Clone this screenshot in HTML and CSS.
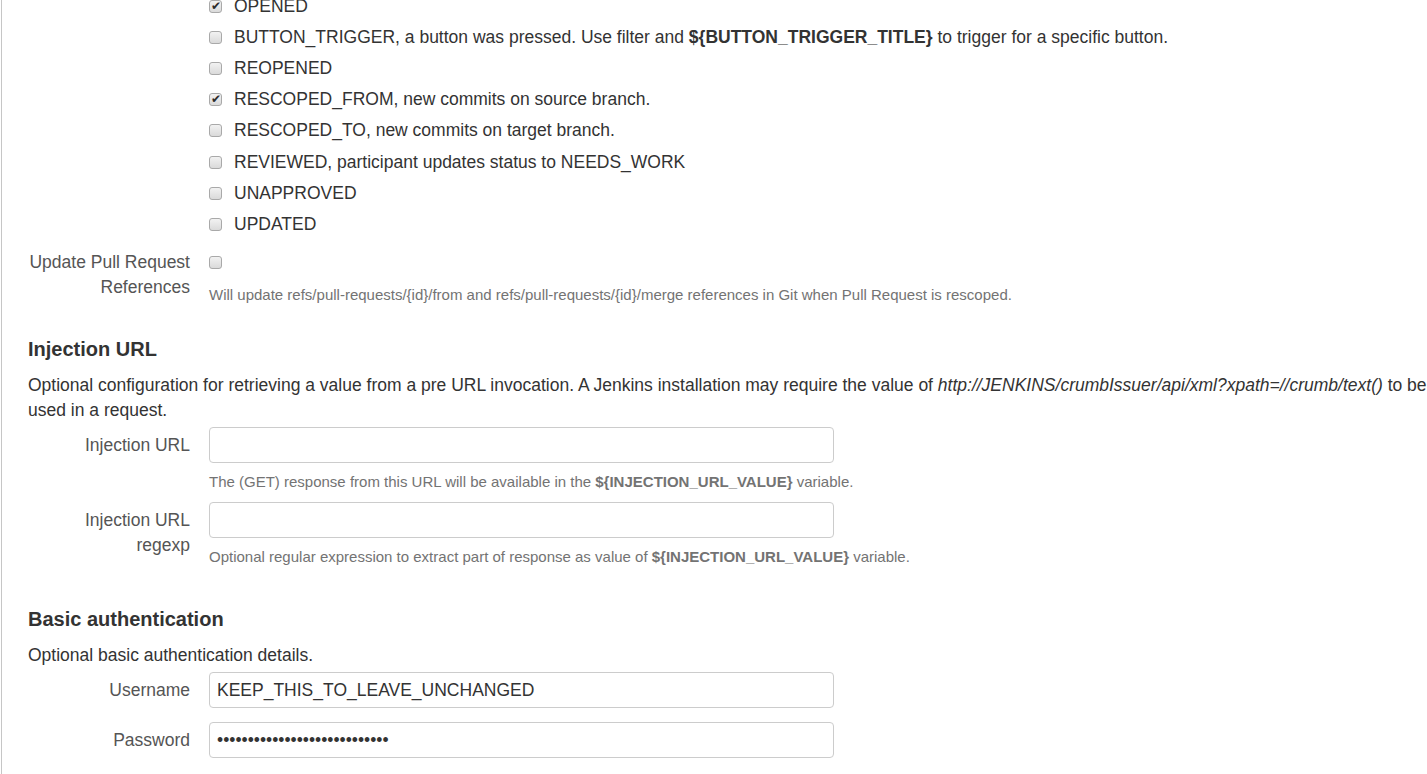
FILE: index.html
```html
<!DOCTYPE html>
<html lang="en">
<head>
    <meta charset="UTF-8">
    <title>Pull Request Notifier settings</title>
    <link rel="stylesheet" href="styles.css">
</head>
<body>

    <div class="page">

        <!-- trigger events -->
        <div class="events">
            <label class="check-row"><input type="checkbox" class="check" checked><span>OPENED</span></label>
            <label class="check-row"><input type="checkbox" class="check"><span>BUTTON_TRIGGER, a button was pressed. Use filter and <b>${BUTTON_TRIGGER_TITLE}</b> to trigger for a specific button.</span></label>
            <label class="check-row"><input type="checkbox" class="check"><span>REOPENED</span></label>
            <label class="check-row"><input type="checkbox" class="check" checked><span>RESCOPED_FROM, new commits on source branch.</span></label>
            <label class="check-row"><input type="checkbox" class="check"><span>RESCOPED_TO, new commits on target branch.</span></label>
            <label class="check-row"><input type="checkbox" class="check"><span>REVIEWED, participant updates status to NEEDS_WORK</span></label>
            <label class="check-row"><input type="checkbox" class="check"><span>UNAPPROVED</span></label>
            <label class="check-row"><input type="checkbox" class="check"><span>UPDATED</span></label>
        </div>

        <div class="form-row refs-row">
            <label class="form-label">Update Pull Request References</label>
            <div class="form-field">
                <div class="single-check"><input type="checkbox" class="check"></div>
                <div class="help help-refs">Will update refs/pull-requests/{id}/from and refs/pull-requests/{id}/merge references in Git when Pull Request is rescoped.</div>
            </div>
        </div>

        <!-- injection url -->
        <h3 class="section-title">Injection URL</h3>
        <p class="section-text">Optional configuration for retrieving a value from a pre URL invocation. A Jenkins installation may require the value of <i>http://JENKINS/crumbIssuer/api/xml?xpath=//crumb/text()</i> to be<br>used in a request.</p>

        <div class="form-row">
            <label class="form-label">Injection URL</label>
            <div class="form-field">
                <input type="text" class="text-input">
                <div class="help">The (GET) response from this URL will be available in the <b>${INJECTION_URL_VALUE}</b> variable.</div>
            </div>
        </div>

        <div class="form-row">
            <label class="form-label">Injection URL regexp</label>
            <div class="form-field">
                <input type="text" class="text-input">
                <div class="help">Optional regular expression to extract part of response as value of <b>${INJECTION_URL_VALUE}</b> variable.</div>
            </div>
        </div>

        <!-- basic auth -->
        <h3 class="section-title auth-title">Basic authentication</h3>
        <p class="section-text">Optional basic authentication details.</p>

        <div class="form-row">
            <label class="form-label">Username</label>
            <div class="form-field">
                <input type="text" class="text-input" value="KEEP_THIS_TO_LEAVE_UNCHANGED">
            </div>
        </div>

        <div class="form-row password-row">
            <label class="form-label">Password</label>
            <div class="form-field">
                <input type="password" class="text-input" value="KEEP_THIS_TO_LEAVE_UNCHANGED">
            </div>
        </div>

    </div>

</body>
</html>
```

FILE: styles.css
```css
html, body {
    margin: 0;
    padding: 0;
    background: #fff;
    overflow: hidden;
}
body {
    font-family: "Liberation Sans", Arial, sans-serif;
    font-size: 17.5px;
    color: #333;
}

.page {
    margin-left: 1px;
    border-left: 1px solid #c6c6c6;
    padding-left: 26px;
    width: 1420px;
    min-height: 800px;
}

/* checkbox list */
.events {
    margin-top: -9.5px;
    padding-left: 181px;
}
.check-row {
    display: flex;
    align-items: center;
    height: 31.2px;
    white-space: nowrap;
}

.check {
    appearance: none;
    -webkit-appearance: none;
    width: 13px;
    height: 13px;
    margin: 0 12px 0 0;
    border: 1px solid #a9a9a9;
    border-radius: 3px;
    background: linear-gradient(#f2f2f2, #dadada);
    position: relative;
    flex-shrink: 0;
}
.check:checked::after {
    content: "\2714";
    position: absolute;
    left: 1px;
    top: -2px;
    font-size: 12px;
    color: #2b2b2b;
}

/* horizontal form */
.form-row {
    display: grid;
    grid-template-columns: 161px 625px;
    column-gap: 19px;
    margin-bottom: 10px;
    padding-left: 1px;
}
.form-label {
    text-align: right;
    color: #555;
    line-height: 25px;
    padding-top: 5.5px;
}
.text-input {
    display: block;
    box-sizing: border-box;
    width: 625px;
    height: 36px;
    margin: 0;
    padding: 0 7px;
    border: 1px solid #ccc;
    border-radius: 4px;
    font-family: inherit;
    font-size: 17.5px;
    color: #333;
    outline: none;
}
.help {
    color: #737373;
    font-size: 15px;
    line-height: 20px;
    margin-top: 9px;
    white-space: nowrap;
}

.refs-row {
    margin-top: 10px;
}
.refs-row .form-label { padding-top: 0; }
.single-check {
    height: 25px;
    display: flex;
    align-items: center;
}
.help-refs { margin-top: 10px; }

.section-title {
    font-size: 20px;
    line-height: 24px;
    margin: 32px 0 11.5px;
}
.auth-title { margin-top: 40px; }
.section-text {
    margin: 0 0 4.5px;
    line-height: 25px;
    white-space: nowrap;
}

.password-row { margin-top: 14px; }
```
